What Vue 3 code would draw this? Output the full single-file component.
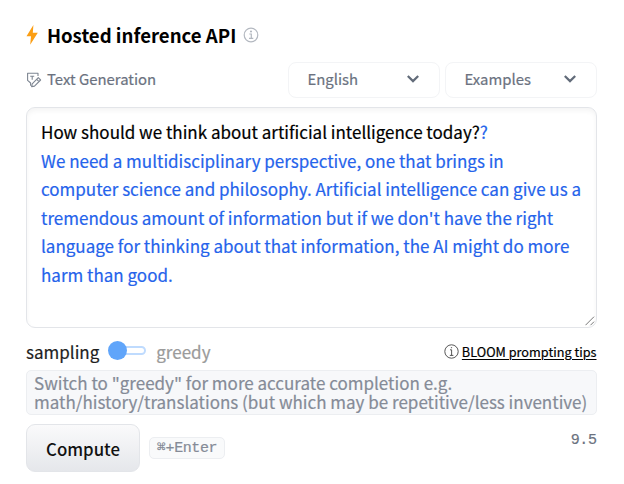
<script setup>
const prompt = 'How should we think about artificial intelligence today?'
const output = [
  'We need a multidisciplinary perspective, one that brings in',
  'computer science and philosophy. Artificial intelligence can give us a',
  "tremendous amount of information but if we don't have the right",
  'language for thinking about that information, the AI might do more',
  'harm than good.',
]
const menus = ['English', 'Examples']
</script>

<template>
  <main class="widget">
    <header class="title">
      <svg class="bolt" width="12" height="20" viewBox="0 0 12 20"><path d="M7.4 0 .5 11.3H5L4.2 19.8 11.8 7.8H6.8Z" fill="#fb9e14" /></svg>
      <h1>Hosted inference API</h1>
      <svg class="info" width="16" height="16" viewBox="0 0 16 16" fill="none" stroke="#b3b8c0" stroke-width="1.2"><circle cx="8" cy="8" r="6.8" /><path d="M6.3 7H8.3V11.4M6 11.4H10.3" /><circle cx="8" cy="4.5" r=".5" fill="#b3b8c0" /></svg>
    </header>

    <div class="toolbar">
      <svg class="task-icon" width="16" height="16" viewBox="0 0 16 16" fill="none" stroke="#7e8692" stroke-width="1.1" stroke-linejoin="round">
        <path d="M5.2 13.2H4.6V11L1.6 8.4V1.2H12V4" />
        <path d="M4.2 4.3H8.2M6.2 4.3V7.8" />
        <path d="M5.6 14.6 6.2 11.8 12.3 5.7 14.6 8 8.5 14.1ZM10.7 7.3 13 9.6" />
      </svg>
      <span class="task">Text Generation</span>
      <div v-for="m in menus" :key="m" class="select">
        <span>{{ m }}</span>
        <svg width="12" height="8" viewBox="0 0 12 8" fill="none" stroke="#626b79" stroke-width="2.2"><path d="M.8 1 6 6.1 11.2 1" /></svg>
      </div>
    </div>

    <div class="editor">
      <div class="line">{{ prompt }}<span class="generated">?</span></div>
      <div v-for="(l, i) in output" :key="i" class="line generated">{{ l }}</div>
      <svg class="grip" width="10" height="10" viewBox="0 0 10 10" stroke="#777" stroke-width="1"><path d="M.5 9.2 9 .7M5.5 9.2 9 5.7" /></svg>
    </div>

    <div class="mode">
      <span class="sampling">sampling</span>
      <span class="switch"><i class="track"></i><i class="knob"></i></span>
      <span class="greedy">greedy</span>
      <svg class="tip-icon" width="15" height="15" viewBox="0 0 15 15" fill="none" stroke="#444" stroke-width=".9"><circle cx="7.5" cy="7.5" r="6.7" /><path d="M6 5.8H7.6V11.4M5.8 11.4H9.4M6.9 3.7H8.1" /></svg>
      <a class="tips">BLOOM prompting tips</a>
    </div>

    <div class="hint">
      <div>Switch to "greedy" for more accurate completion e.g.</div>
      <div>math/history/translations (but which may be repetitive/less inventive)</div>
    </div>

    <footer class="actions">
      <button class="compute">Compute</button>
      <kbd class="key">⌘+Enter</kbd>
      <span class="time">9.5</span>
    </footer>
  </main>
</template>

<style>
body { background: #fff; }
</style>

<style scoped>
* { box-sizing: border-box; }
.widget { width: 624px; height: 484px; padding: 20px 27.5px 0 26px; overflow: hidden; font-family: "Noto Sans CJK SC", "Noto Sans", sans-serif; font-size: 17px; white-space: nowrap; background: #fff; -webkit-text-stroke: .2px currentColor; }
.title { display: flex; align-items: center; height: 30px; }
h1 { margin: 0 0 0 9px; font-size: 18.6px; font-weight: 700; line-height: 30px; color: #000; -webkit-text-stroke: 0; }
.info { margin-left: 7px; }
.toolbar { display: flex; align-items: center; height: 36px; margin-top: 12px; color: #6b7280; font-size: 14.9px; line-height: 34px; }
.task { margin: -2px auto 0 5px; }
.select { display: flex; align-items: center; justify-content: space-between; width: 152px; height: 36px; padding: 0 20px 2px 19px; border: 1px solid #f3f4f6; border-radius: 8px; }
.select + .select { margin-left: 5px; }
.editor { position: relative; height: 221px; margin-top: 9px; padding: 10px 14px; border: 1px solid #e3e5e9; border-radius: 9px; box-shadow: inset 0 3px 5px rgba(0, 0, 0, .045); color: #000; }
.line { height: 28.5px; line-height: 28.5px; }
.generated { color: #2563eb; }
.grip { position: absolute; right: 1px; bottom: 1px; }
.mode { display: flex; align-items: center; height: 26px; margin-top: 10px; line-height: 26px; }
.sampling, .greedy { padding-top: 1px; }
.sampling { color: #1f1f1f; }
.switch { position: relative; width: 38px; height: 20px; margin: 0 10px 0 9px; }
.track { position: absolute; left: 6px; top: 5px; width: 32px; height: 9px; border: 2px solid #bfdbfe; border-radius: 5px; }
.knob { position: absolute; left: 0; top: 0; width: 19px; height: 19px; border-radius: 50%; background: #60a5fa; }
.greedy { margin-right: auto; color: #9b9b9b; }
.tips { margin: 2px 0 0 3px; font-size: 12.7px; color: #000; text-decoration: underline; text-underline-offset: 2px; }
.hint { height: 45px; margin-top: 6px; padding: 2px 7px; border: 1px solid #eceef1; border-radius: 5px; background: #f7f8fa; color: #858b97; line-height: 19px; }
.actions { display: flex; align-items: center; height: 48px; margin-top: 9px; }
.compute { width: 114px; height: 48px; padding: 1px 0 0; border: 1px solid #e3e5e9; border-radius: 9px; background: linear-gradient(#fafafb, #e5e7eb); color: #111; font: 500 16.8px/44px "Noto Sans CJK SC", sans-serif; -webkit-text-stroke: 0; }
.key { height: 22px; margin-left: 9px; padding: 1px 7px; border: 1px solid #eceef1; border-radius: 5px; background: #f9fafb; color: #858b97; font: 15px/20px "Liberation Mono", "DejaVu Sans Mono", monospace; letter-spacing: -.42px; }
.time { margin: -15px 0 0 auto; color: #6b7280; font: 15px/20px "Liberation Mono", monospace; letter-spacing: -.42px; }
</style>
